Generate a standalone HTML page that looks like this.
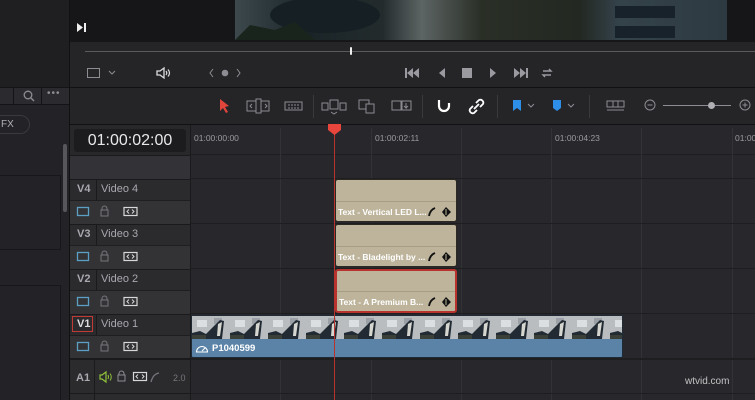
<!DOCTYPE html>
<html><head><meta charset="utf-8"><style>
*{margin:0;padding:0;box-sizing:border-box}
body{width:755px;height:400px;overflow:hidden;background:#28282c;font-family:"Liberation Sans",sans-serif;position:relative}
.a{position:absolute}
.t{color:#9a9aa0;font-size:10px}
.hdr{color:#a8a8ae;font-size:11px}
.clip{position:absolute;background:#bdb49b;border-radius:3px;border:1px solid #2a2820}
.clip .bar{position:absolute;left:0;right:0;bottom:0;height:20px;border-top:1px solid #a59d86}
.clip .lbl{position:absolute;left:2px;bottom:4px;font-size:8.5px;font-weight:bold;color:#fff;width:88px;white-space:nowrap;overflow:hidden}
</style></head><body>
<div class="a" style="left:0;top:0;width:69px;height:400px;background:#232327"></div>
<div class="a" style="left:0;top:0;width:69px;height:87px;background:#1f1f22"></div>
<div class="a" style="left:0;top:87px;width:69px;height:18px;background:#2b2b2f;border-top:1px solid #141416;border-bottom:1px solid #141416"></div>
<div class="a" style="left:13px;top:88px;width:1px;height:16px;background:#141416"></div>
<div class="a" style="left:41px;top:88px;width:1px;height:16px;background:#141416"></div>
<svg class="a" style="left:22px;top:89px" width="14" height="14"><circle cx="6" cy="6" r="3.8" stroke="#8c8c92" stroke-width="1.3" fill="none"/><path d="M9 9l3 3" stroke="#8c8c92" stroke-width="1.4"/></svg>
<div class="a" style="left:47px;top:88px;color:#8c8c92;font-size:10px;letter-spacing:1px">•••</div>
<div class="a" style="left:-12px;top:115px;width:42px;height:19px;border:1px solid #3a3a3e;border-radius:10px;color:#b0b0b6;font-size:10px;padding:3px 0 0 12px">FX</div>
<div class="a" style="left:0;top:175px;width:60px;height:1px;background:#17171a"></div>
<div class="a" style="left:60px;top:175px;width:1px;height:75px;background:#17171a"></div>
<div class="a" style="left:0;top:249px;width:61px;height:1px;background:#17171a"></div>
<div class="a" style="left:0;top:285px;width:60px;height:1px;background:#17171a"></div>
<div class="a" style="left:60px;top:285px;width:1px;height:115px;background:#17171a"></div>
<div class="a" style="left:63px;top:144px;width:4px;height:68px;background:#56565b;border-radius:2px"></div>
<div class="a" style="left:69px;top:0;width:1px;height:400px;background:#111113"></div>
<div class="a" style="left:70px;top:0;width:685px;height:42px;background:#161618"></div>
<svg class="a" style="left:235px;top:0" width="492" height="40">
<defs><linearGradient id="g" x1="0" x2="1"><stop offset="0" stop-color="#3c484c"/><stop offset=".15" stop-color="#1a2428"/><stop offset=".3" stop-color="#232b2c"/><stop offset=".38" stop-color="#5c6464"/><stop offset=".5" stop-color="#2a2f26"/><stop offset=".7" stop-color="#232822"/><stop offset=".78" stop-color="#34424a"/><stop offset="1" stop-color="#2e3a42"/></linearGradient></defs>
<rect width="492" height="40" fill="url(#g)"/>
<ellipse cx="90" cy="15" rx="55" ry="18" fill="#151f24"/>
<rect x="380" y="6" width="60" height="12" fill="#18222a"/><rect x="380" y="26" width="60" height="12" fill="#18222a"/>
<path d="M0 40L15 25L40 30L60 22L80 40Z" fill="#19241d"/>
</svg>
<svg class="a" style="left:76px;top:22px" width="11" height="11"><path d="M1 1L7 5.5L1 10Z M8 1h2v9h-2z" fill="#eee"/></svg>
<div class="a" style="left:70px;top:42px;width:685px;height:45px;background:#252528"></div>
<div class="a" style="left:85px;top:51px;width:670px;height:1px;background:#5a5a5e"></div>
<div class="a" style="left:350px;top:47px;width:2px;height:8px;background:#eee;border-radius:1px"></div>
<svg class="a" style="left:86px;top:67px" width="32" height="12"><rect x="1.5" y="1.5" width="12" height="9" stroke="#8c8c92" fill="none"/><path d="M23 4l3 3 3-3" stroke="#8c8c92" fill="none"/></svg>
<svg class="a" style="left:155px;top:66px" width="16" height="14"><path d="M2 5h3l4-3v10l-4-3H2z" stroke="#ddd" stroke-width="1.3" fill="none"/><path d="M11 5q1.5 2 0 4M13 3.5q3 3.5 0 7" stroke="#ddd" stroke-width="1.2" fill="none"/></svg>
<svg class="a" style="left:208px;top:67px" width="34" height="12"><path d="M5 2l-3 4 3 4M29 2l3 4-3 4" stroke="#8c8c92" fill="none"/><circle cx="17" cy="6" r="3.3" fill="#8c8c92"/></svg>
<svg class="a" style="left:404px;top:66px" width="150" height="14">
<g fill="#9a9aa0"><rect x="1" y="2" width="2" height="10"/><path d="M9 2L3 7l6 5zM15 2L9 7l6 5z"/>
<path d="M41 2L35 7l6 5z"/><rect x="58" y="2" width="10" height="10"/><path d="M86 2l6 5-6 5z"/>
<path d="M110 2l6 5-6 5zM116 2l6 5-6 5z"/><rect x="122" y="2" width="2" height="10"/></g>
<path d="M139 5h8l-2-2M147 9h-8l2 2" stroke="#9a9aa0" stroke-width="1.4" fill="none"/></svg>
<div class="a" style="left:70px;top:87px;width:685px;height:1px;background:#111113"></div>
<div class="a" style="left:70px;top:88px;width:685px;height:37px;background:#252528"></div>
<svg class="a" style="left:218px;top:98px" width="14" height="16"><path d="M2 1l9 7-4 1 3 5-2 1-3-5-3 3z" fill="#e2453c"/></svg>
<svg class="a" style="left:246px;top:98px" width="26" height="16"><rect x="1" y="3" width="22" height="10" stroke="#8c8c92" fill="none"/><rect x="10" y="1" width="5" height="14" stroke="#8c8c92" fill="#252528"/><path d="M6 6l-2 2 2 2M19 6l2 2-2 2" stroke="#8c8c92" fill="none"/></svg>
<svg class="a" style="left:284px;top:101px" width="20" height="11"><rect x="1" y="1" width="17" height="8" stroke="#8c8c92" fill="none"/><path d="M4 4h11M4 7h11" stroke="#8c8c92" stroke-dasharray="2 1"/></svg>
<div class="a" style="left:313px;top:95px;width:1px;height:23px;background:#3a3a3e"></div>
<svg class="a" style="left:321px;top:98px" width="26" height="18"><rect x="1" y="5" width="6" height="7" stroke="#8c8c92" fill="none"/><rect x="9" y="2" width="8" height="9" stroke="#8c8c92" fill="none"/><rect x="19" y="5" width="6" height="7" stroke="#8c8c92" fill="none"/><path d="M10 14l3 2 3-2" stroke="#8c8c92" fill="none"/></svg>
<svg class="a" style="left:358px;top:99px" width="18" height="16"><rect x="1" y="1" width="10" height="9" stroke="#8c8c92" fill="none"/><rect x="8" y="5" width="8" height="9" stroke="#8c8c92" fill="#252528"/></svg>
<svg class="a" style="left:391px;top:98px" width="22" height="18"><rect x="1" y="3" width="10" height="9" stroke="#8c8c92" fill="none"/><rect x="10" y="3" width="10" height="9" stroke="#8c8c92" fill="none"/><path d="M15 5v5l-2-2M15 10l2-2" stroke="#8c8c92" fill="none"/></svg>
<div class="a" style="left:422px;top:95px;width:1px;height:23px;background:#3a3a3e"></div>
<svg class="a" style="left:436px;top:98px" width="16" height="17"><path d="M3 2v6a5 5 0 0 0 10 0V5" stroke="#fff" stroke-width="2.2" fill="none"/></svg>
<svg class="a" style="left:468px;top:98px" width="18" height="17"><path d="M8 5l3-3a3 3 0 0 1 4 4l-3 3M9 12l-3 3a3 3 0 0 1-4-4l3-3M6 11l5-5" stroke="#fff" stroke-width="1.8" fill="none"/></svg>
<div class="a" style="left:497px;top:95px;width:1px;height:23px;background:#3a3a3e"></div>
<svg class="a" style="left:511px;top:99px" width="30" height="14"><path d="M2 1h8v11l-4-3-4 3z" fill="#2e8fe8"/><path d="M17 5l3 3 3-3" stroke="#8c8c92" fill="none"/></svg>
<svg class="a" style="left:551px;top:99px" width="30" height="14"><path d="M2 1h8v8l-4 3-4-3z" fill="#2e8fe8"/><path d="M17 5l3 3 3-3" stroke="#8c8c92" fill="none"/></svg>
<div class="a" style="left:589px;top:95px;width:1px;height:23px;background:#3a3a3e"></div>
<svg class="a" style="left:606px;top:99px" width="20" height="14"><rect x="1" y="2" width="17" height="6" stroke="#8c8c92" fill="none"/><path d="M7 2v6M12 2v6M1 11h17" stroke="#8c8c92"/></svg>
<svg class="a" style="left:643px;top:98px" width="14" height="14"><circle cx="7" cy="7" r="5" stroke="#8c8c92" fill="none"/><path d="M4.5 7h5" stroke="#8c8c92"/></svg>
<div class="a" style="left:663px;top:105px;width:68px;height:1px;background:#8c8c92"></div>
<div class="a" style="left:708px;top:102px;width:7px;height:7px;border-radius:50%;background:#b0b0b4"></div>
<svg class="a" style="left:738px;top:98px" width="14" height="14"><circle cx="7" cy="7" r="5" stroke="#8c8c92" fill="none"/><path d="M4.5 7h5M7 4.5v5" stroke="#8c8c92"/></svg>
<div class="a" style="left:70px;top:124px;width:685px;height:1px;background:#111113"></div>
<div class="a" style="left:70px;top:125px;width:120px;height:275px;background:#28282b"></div>
<div class="a" style="left:74px;top:129px;width:112px;height:23px;background:#1c1c1f;border-radius:3px;color:#e8e8ea;font-size:16px;text-align:center;line-height:23px">01:00:02:00</div>
<div class="a" style="left:70px;top:155px;width:120px;height:24px;background:#333337;border-top:1px solid #1a1a1c"></div>
<div class="a" style="left:190px;top:125px;width:565px;height:30px;background:#28282c;border-bottom:1px solid #1e1e21"></div>
<div class="a" style="left:190px;top:125px;width:1px;height:275px;background:#1a1a1c"></div>
<div class="a t" style="left:194px;top:133px;font-size:8.5px">01:00:00:00</div>
<div class="a t" style="left:375px;top:133px;font-size:8.5px">01:00:02:11</div>
<div class="a t" style="left:555px;top:133px;font-size:8.5px">01:00:04:23</div>
<div class="a t" style="left:735px;top:133px;font-size:8.5px">01:00</div>
<div class="a" style="left:280px;top:128px;width:1px;height:272px;background:#333337"></div>
<div class="a" style="left:371px;top:128px;width:1px;height:272px;background:#333337"></div>
<div class="a" style="left:461px;top:128px;width:1px;height:272px;background:#333337"></div>
<div class="a" style="left:551px;top:128px;width:1px;height:272px;background:#333337"></div>
<div class="a" style="left:641px;top:128px;width:1px;height:272px;background:#333337"></div>
<div class="a" style="left:732px;top:128px;width:1px;height:272px;background:#333337"></div>
<div class="a" style="left:70px;top:179px;width:120px;height:21px;background:#2b2b2e;border-top:1px solid #1a1a1c"></div>
<div class="a" style="left:70px;top:200px;width:120px;height:24px;background:#333336;border-top:1px solid #1e1e20"></div>
<div class="a" style="left:70px;top:224px;width:120px;height:21px;background:#2b2b2e;border-top:1px solid #1a1a1c"></div>
<div class="a" style="left:70px;top:245px;width:120px;height:24px;background:#333336;border-top:1px solid #1e1e20"></div>
<div class="a" style="left:70px;top:269px;width:120px;height:21px;background:#2b2b2e;border-top:1px solid #1a1a1c"></div>
<div class="a" style="left:70px;top:290px;width:120px;height:24px;background:#333336;border-top:1px solid #1e1e20"></div>
<div class="a" style="left:70px;top:314px;width:120px;height:21px;background:#2b2b2e;border-top:1px solid #1a1a1c"></div>
<div class="a" style="left:70px;top:335px;width:120px;height:24px;background:#333336;border-top:1px solid #1e1e20"></div>
<div class="a" style="left:70px;top:358px;width:120px;height:42px;background:#2b2b2e;border-top:2px solid #1a1a1c"></div>
<div class="a" style="left:70px;top:393px;width:120px;height:1px;background:#1a1a1c"></div>
<div class="a" style="left:96px;top:179px;width:1px;height:21px;background:#1a1a1c"></div>
<div class="a" style="left:96px;top:224px;width:1px;height:21px;background:#1a1a1c"></div>
<div class="a" style="left:96px;top:269px;width:1px;height:21px;background:#1a1a1c"></div>
<div class="a" style="left:96px;top:314px;width:1px;height:21px;background:#1a1a1c"></div>
<div class="a" style="left:94px;top:360px;width:1px;height:40px;background:#1a1a1c"></div>
<div class="a hdr" style="left:77px;top:183px;font-weight:bold">V4</div><div class="a hdr" style="left:101px;top:183px">Video 4</div>
<div class="a hdr" style="left:77px;top:228px;font-weight:bold">V3</div><div class="a hdr" style="left:101px;top:228px">Video 3</div>
<div class="a hdr" style="left:77px;top:273px;font-weight:bold">V2</div><div class="a hdr" style="left:101px;top:273px">Video 2</div>
<div class="a" style="left:72px;top:316px;width:21px;height:16px;border:1px solid #c23a36"></div>
<div class="a hdr" style="left:77px;top:318px;font-weight:bold;color:#ddd">V1</div><div class="a hdr" style="left:101px;top:318px">Video 1</div>
<div class="a hdr" style="left:76px;top:372px;font-weight:bold">A1</div>
<svg class="a" style="left:76px;top:205px" width="70" height="14"><rect x="1.5" y="2.5" width="11" height="8" stroke="#5b9fc2" stroke-width="1.3" fill="none"/><path d="M26 5V3.5a2.5 2.5 0 0 1 5 0V5M25 5h7v6h-7z" stroke="#76767c" fill="none"/><rect x="48" y="2.5" width="13" height="8" stroke="#d8d8d8" stroke-width="1.2" fill="none"/><path d="M53 4.5l-2 2 2 2M56 4.5l2 2-2 2" stroke="#d8d8d8" fill="none"/></svg>
<svg class="a" style="left:76px;top:250px" width="70" height="14"><rect x="1.5" y="2.5" width="11" height="8" stroke="#5b9fc2" stroke-width="1.3" fill="none"/><path d="M26 5V3.5a2.5 2.5 0 0 1 5 0V5M25 5h7v6h-7z" stroke="#76767c" fill="none"/><rect x="48" y="2.5" width="13" height="8" stroke="#d8d8d8" stroke-width="1.2" fill="none"/><path d="M53 4.5l-2 2 2 2M56 4.5l2 2-2 2" stroke="#d8d8d8" fill="none"/></svg>
<svg class="a" style="left:76px;top:295px" width="70" height="14"><rect x="1.5" y="2.5" width="11" height="8" stroke="#5b9fc2" stroke-width="1.3" fill="none"/><path d="M26 5V3.5a2.5 2.5 0 0 1 5 0V5M25 5h7v6h-7z" stroke="#76767c" fill="none"/><rect x="48" y="2.5" width="13" height="8" stroke="#d8d8d8" stroke-width="1.2" fill="none"/><path d="M53 4.5l-2 2 2 2M56 4.5l2 2-2 2" stroke="#d8d8d8" fill="none"/></svg>
<svg class="a" style="left:76px;top:340px" width="70" height="14"><rect x="1.5" y="2.5" width="11" height="8" stroke="#5b9fc2" stroke-width="1.3" fill="none"/><path d="M26 5V3.5a2.5 2.5 0 0 1 5 0V5M25 5h7v6h-7z" stroke="#76767c" fill="none"/><rect x="48" y="2.5" width="13" height="8" stroke="#d8d8d8" stroke-width="1.2" fill="none"/><path d="M53 4.5l-2 2 2 2M56 4.5l2 2-2 2" stroke="#d8d8d8" fill="none"/></svg>
<svg class="a" style="left:98px;top:370px" width="90" height="14"><path d="M2 5h2l4-3v10l-4-3H2z" stroke="#8fc23a" stroke-width="1.2" fill="none"/><path d="M10 5q1 2 0 4M12 3.5q2.5 3.5 0 7" stroke="#8fc23a" fill="none"/><path d="M21 5V3.5a2.5 2.5 0 0 1 5 0V5M20 5h7v6h-7z" stroke="#8c8c92" fill="none"/><rect x="35.5" y="2.5" width="13" height="8" stroke="#d8d8d8" stroke-width="1.2" fill="none"/><path d="M40 4.5l-2 2 2 2M44 4.5l2 2-2 2" stroke="#d8d8d8" fill="none"/><path d="M53 12q2-8 8-9" stroke="#76767c" stroke-width="1.3" fill="none"/><text x="75" y="11" fill="#76767c" font-size="9" font-family="Liberation Sans">2.0</text></svg>
<div class="a" style="left:191px;top:178px;width:564px;height:1px;background:#1e1e21"></div>
<div class="a" style="left:191px;top:223px;width:564px;height:1px;background:#1e1e21"></div>
<div class="a" style="left:191px;top:268px;width:564px;height:1px;background:#1e1e21"></div>
<div class="a" style="left:191px;top:313px;width:564px;height:1px;background:#1e1e21"></div>
<div class="a" style="left:191px;top:358px;width:564px;height:2px;background:#1e1e21"></div>
<div class="a" style="left:191px;top:393px;width:564px;height:1px;background:#1e1e21"></div>
<div class="clip" style="left:335px;top:179px;width:122px;height:43px"><div class="bar"></div><div class="lbl">Text - Vertical LED L...</div></div>
<div class="clip" style="left:335px;top:224px;width:122px;height:43px"><div class="bar"></div><div class="lbl">Text - Bladelight by ...</div></div>
<div class="clip" style="left:335px;top:269px;width:122px;height:44px;border:2px solid #b8332e"><div class="bar"></div><div class="lbl">Text - A Premium B...</div></div>
<svg class="a" style="left:427px;top:206px" width="26" height="12"><path d="M2 10q1-6 6-8" stroke="#111" stroke-width="1.8" fill="none"/><path d="M19 1l5 5-5 5-4-5z" fill="#111"/><path d="M19 3v6" stroke="#bdb49b"/></svg>
<svg class="a" style="left:427px;top:251px" width="26" height="12"><path d="M2 10q1-6 6-8" stroke="#111" stroke-width="1.8" fill="none"/><path d="M19 1l5 5-5 5-4-5z" fill="#111"/><path d="M19 3v6" stroke="#bdb49b"/></svg>
<svg class="a" style="left:427px;top:296px" width="26" height="12"><path d="M2 10q1-6 6-8" stroke="#111" stroke-width="1.8" fill="none"/><path d="M19 1l5 5-5 5-4-5z" fill="#111"/><path d="M19 3v6" stroke="#bdb49b"/></svg>
<div class="a" style="left:191px;top:315px;width:432px;height:43px;background:#5a83a7;border:1px solid #1e2a36;border-radius:2px"></div>
<svg class="a" style="left:192px;top:316px" width="430" height="23">
<defs><pattern id="p" width="38" height="23" patternUnits="userSpaceOnUse">
<rect width="38" height="23" fill="#b9bdc0"/><rect x="5" y="4" width="10" height="7" fill="#dcdfe1"/><rect x="22" y="2" width="8" height="6" fill="#9aa0a5"/>
<path d="M0 23V17l8-2 6 3L28 4l4 1-2 18z" fill="#222b33"/><path d="M26 8l4-2-2 14h-3z" fill="#d6d6d0"/><path d="M0 19h14v4H0z" fill="#3a3f38"/></pattern></defs>
<rect width="430" height="23" fill="url(#p)"/></svg>
<svg class="a" style="left:195px;top:343px" width="14" height="11"><path d="M1.5 9a5.5 5.5 0 0 1 11 0z" stroke="#fff" stroke-width="1.1" fill="none"/><path d="M7 8l3-3" stroke="#fff"/></svg>
<div class="a" style="left:212px;top:343px;color:#fff;font-size:9.5px;font-weight:bold">P1040599</div>
<div class="a" style="left:334px;top:125px;width:1px;height:275px;background:#b8332e"></div>
<svg class="a" style="left:328px;top:124px" width="13" height="12"><path d="M0 0h13v6l-6.5 5L0 6z" fill="#e8453c"/></svg>
<div class="a" style="left:685px;top:376px;color:#e8e8e8;font-size:10px;opacity:.8">wtvid.com</div>
</body></html>
